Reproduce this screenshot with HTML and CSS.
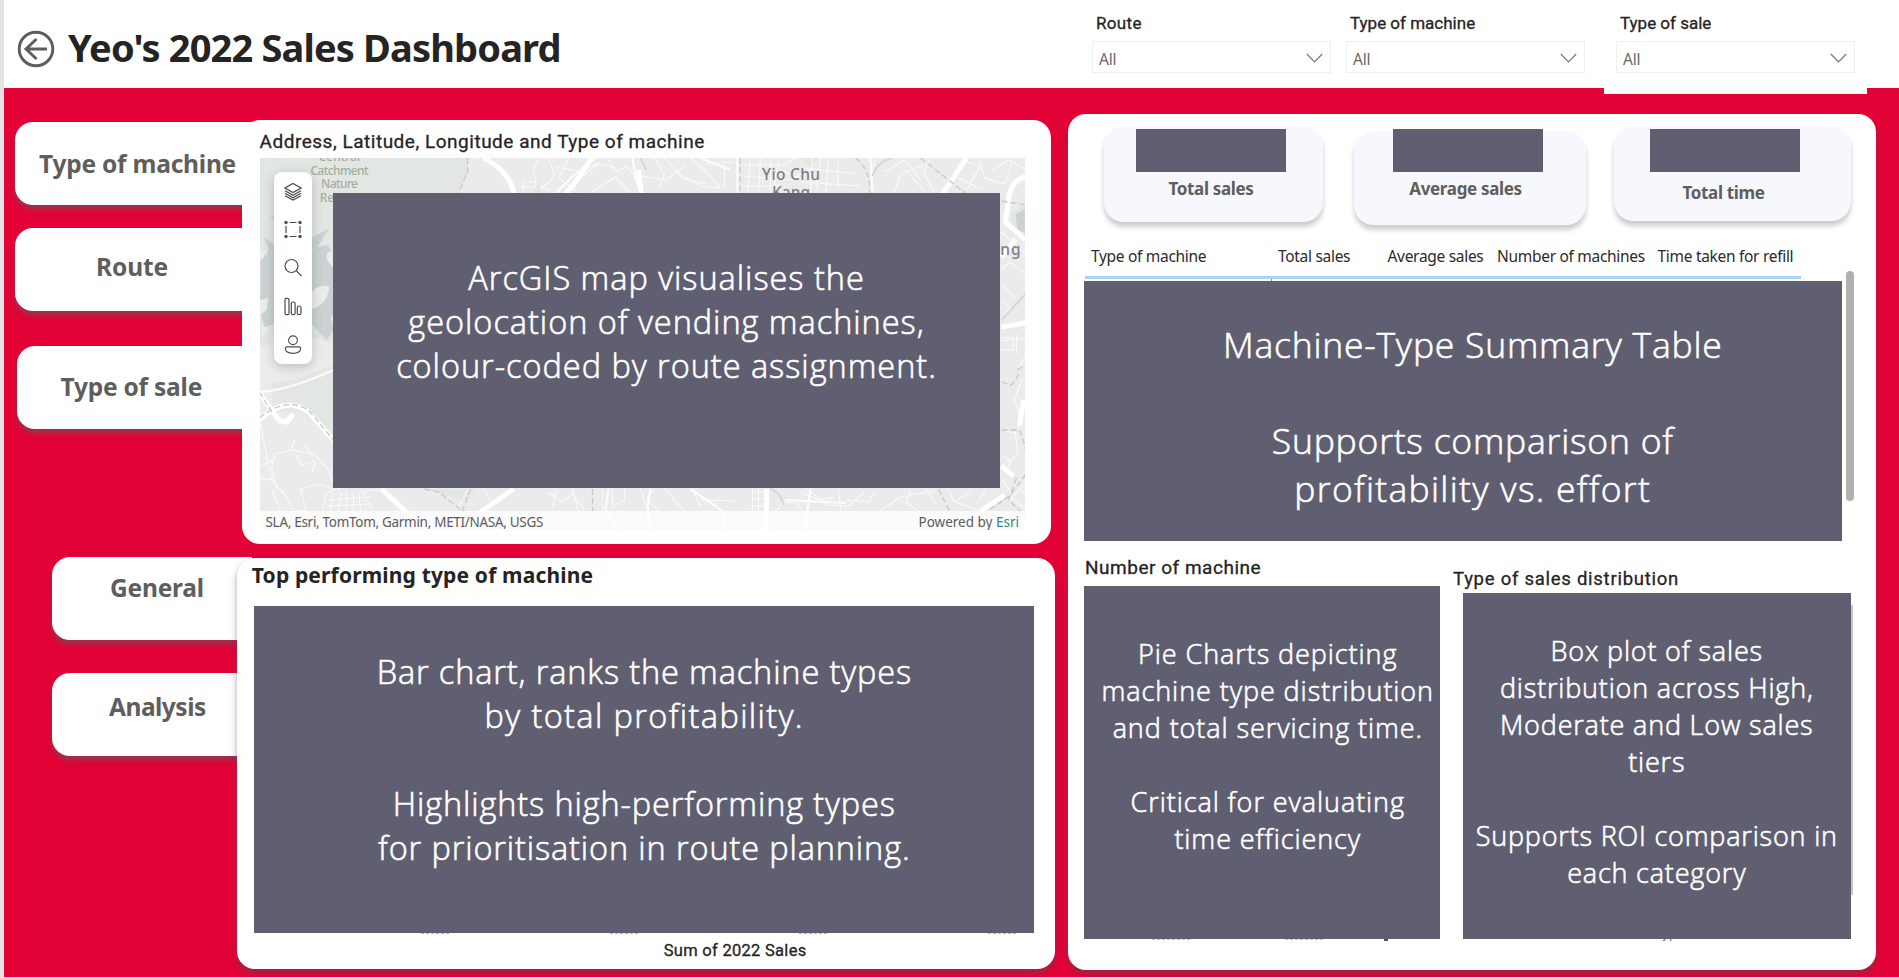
FILE: index.html
```
<!DOCTYPE html>
<html lang="en">
<head>
<meta charset="utf-8">
<title>Yeo's 2022 Sales Dashboard</title>
<link rel="stylesheet" href="styles.css">
</head>
<body>
<div class="page">
  <header class="header">
    <svg class="back" viewBox="0 0 38 38"><circle cx="19" cy="19" r="16.8"/><path d="M30 19H9M19.5 9 9 19l10.500 10"/></svg>
    <h1 class="title">Yeo's 2022 Sales Dashboard</h1>
    <div class="filters">
      <div class="filter">
        <div class="filter-label filter-label-route">Route</div>
        <div class="select"><span>All</span><svg class="chevron" viewBox="0 0 17 10"><path d="M.8 1l7.700 7.800L16.200 1"/></svg></div>
      </div>
      <div class="filter">
        <div class="filter-label">Type of machine</div>
        <div class="select"><span>All</span><svg class="chevron" viewBox="0 0 17 10"><path d="M.8 1l7.700 7.800L16.200 1"/></svg></div>
      </div>
      <div class="filter filter-raised">
        <div class="filter-label">Type of sale</div>
        <div class="select"><span>All</span><svg class="chevron" viewBox="0 0 17 10"><path d="M.8 1l7.700 7.800L16.200 1"/></svg></div>
      </div>
    </div>
  </header>

  <main class="main">
    <nav class="tabs">
      <a class="tab tab-machine">Type of machine</a>
      <a class="tab tab-route">Route</a>
      <a class="tab tab-sale">Type of sale</a>
      <a class="tab tab-general">General</a>
      <a class="tab tab-analysis">Analysis</a>
    </nav>

    <div class="center">
      <section class="card map-card">
        <h2 class="din map-title">Address, Latitude, Longitude and Type of machine</h2>
        <div class="map">
          <svg class="map-art" viewBox="259.5 158 765.5 372" preserveAspectRatio="none">
            <rect x="259" y="158" width="767" height="373" fill="#ebebeb"/>
            <path class="park" d="M259 158H467L468 172 458 193 333 200V345L300 350 259 345Z"/>
            <path class="park" d="M271 384L300 378 333 364V440L318 424 300 412 272 410Z"/>
            <path class="park" d="M425 489H475L468 500 460 500ZM530 191l5-10 8 8-4 5ZM800 158H820L808 166ZM1010 214l15-10v34l-13-8Z"/>
            <path class="water" d="M263 237l16 11 23-5 27-15-12 19 10-2 6 8V330l-7 10-14-15-14-8-34 10-4-14V252l6 4 2-8ZM269 215l6 3-1 3ZM1015 214l10-5v24l-8-3ZM264 349l20-5-5 14Z"/>
            <path class="land" d="M307 296q12-14 22-9 -2 15-14 21l-10 2ZM259 300l9-2-2 12-7 6ZM328 262q-4-5 0-10l5-1v17ZM259 250l6 0-2 8-4 3ZM303 250l10-2-8 10ZM260 325l9 4-8 8ZM330 318l3-3v10Z"/>
            <path class="land" d="M259 350Q290 326 333 345V366Q290 378 259 388Z"/>
            <g class="road minor">
              <path d="M538 158l-5 10 3 16-6 9M548 158l6 18-14 14M556 167l22 4 22-8M568 158l-10 20 20 15M575 182l22-18 20 4M607 158l8 14 12-6 14 22M590 193l25-16 15 16M642 176l24 4 18-14M654 158l10 17-5 12M664 158l18 20 24 6M676 172l24 14 20 2M690 158l16 14 14 16M724 158v30M704 164l28-2M742 165h40l14-7M742 176l48 4 22-12M750 158l-3 34M760 158l-2 35M770 158v34M778 160l-5 30M738 186h42M812 158l-2 34M820 158l-4 32M828 158l-3 34M838 158l-1 30M802 168l56 6M800 182l60 4M780 170l22 10M874 158l-4 32M884 172l20-12 16 20M894 192l6-18 26-10M930 158l-7 14 10 20M905 170l20 22M960 160l20 6-14 24M978 158l6 20 20 6 8-22M990 172l18-12 17 10M958 178l24 12"/>
              <path d="M519 187h16v-5h-12v10M540 186l10 5"/>
              <path d="M259 420l12 60 12 14M276 489l-5-20 3-15 16-4 24 4 14 16 4 12M290 450l4-10M296 455l5 10 14-4-4 14M303 443l8 13M262 458l10 3-12 5M259 478l14 2M272 490l8 22M280 487l12 22 14 3-6-24M300 489l18-5 15 5M322 511l4-18 14-5M330 511l3-18M338 511l3-19M346 511v-20M353 511v-19M360 511l-2-18M328 500l42-3M326 506l46-2M372 510l-10-18 18-3M468 489l-10 18M484 489l8 16M548 492l14 10 10-8 12 16M556 489l-4 18M572 489l6 22M602 489v22M612 489v20M624 489v12l-10 4M640 489l6 18M654 489l-8 10 12 12M692 489l8 18M700 500l36 1M664 489l20 22M752 492h12M750 499h14M750 506h14M752 489v22M758 489v22M776 511l6-9 14 1 6 8M800 492l18 8 16-3M806 489l22 16 20 1 16-14M838 489l2 22M846 500l22 2 6-10M880 511l20-14 34-6M910 489l-4 14 12 8M925 489l10 14M948 489l5 12 26 10M956 500l14-8M985 489l-8 14"/>
              <path d="M1001 232l24 22M1001 270l8-8 16 12M1001 283l14 16M1002 300l8 8-9 12M1001 338h12v12h-12M1016 334v18M1001 341l24-3M1018 368l7-12M1001 430l14 3 2 20-10 14M1001 455l9 6-3 9M1018 430v-20l-4-10 8-22M1008 495l17 14M1016 486l9 8M1025 484l-16 16M1002 480l8 12"/>
            </g>
            <g class="road mid">
              <path d="M595 158l-25 20-15 16M632 158l3 18 4 14M737 158v36M700 158l30 12M870 158l2 34M650 489l-3 18 3 24M690 489l32 22 2 18M810 489l-6 41M608 489l-3 20 12 20M785 500l60 3M259 392q30-2 74-22"/>
            </g>
            <g class="road major">
              <path d="M483 158q25 12 31 36M591 158q-12 20-26 36M638 170l3 24M966 158l-24 36M1025 176q-16 6-17 24l-3 22 20 18M1001 257l14-18M1001 327l24-4M381 489l26 24M513 489l-34 24M766 489v41M259 420Q285 395 308 412L333 440M259 393l14 20 6 8 7 1 7-8M1023 400l-4 26M1001 466l12 10M980 511l24-16"/>
            </g>
            <g class="rail">
              <path d="M467 158v14l-9 21M739.500 158v36M855 158q16 12 14 36M920 158l46 36M1001 201l24 4M1001 382l10 3 6-8 1-8 7-4M1001 430h18q10 22 5 46l-15 20-26 18M1016 478l-8 22 17 16M259 418Q285 396 308 410L333 440M259 392l12 20M424 489l14 3 25 20M470 489l-8 22M592 489v22M938 489l12 24"/>
            </g>
            <path class="creek" d="M892 158q-16 4-20 18M640 158l6 12M770 489q10 3 13 16M1001 320l24-26"/>
            <g class="place park-name">
              <text x="339" y="161">Central</text>
              <text x="339" y="174.500" textLength="58">Catchment</text>
              <text x="339" y="188" textLength="37">Nature</text>
              <text x="342" y="201.500">Reserve</text>
            </g>
            <g class="place town">
              <text x="790.500" y="179.500" textLength="58">Yio Chu</text>
              <text x="790.500" y="197.500" textLength="38">Kang</text>
              <text x="983" y="255" textLength="74">Hougang</text>
            </g>
          </svg>
          <div class="note map-note">ArcGIS map visualises the<br>geolocation of vending machines,<br>colour-coded by route assignment.</div>
          <div class="toolbar">
            <svg class="tool" viewBox="0 0 18 18"><path d="M9 1l8 4.500-8 4.500-8-4.500zM1 8.300l8 4.400 8-4.400M1 10.800l8 4.400 8-4.400M1 13.200L9 17.500l8-4.300"/></svg>
            <svg class="tool" viewBox="0 0 18 18"><path d="M5.500 2H12.500M5.500 16H12.500M2 5.500V12.500M16 5.500V12.500"/><g class="dot"><circle cx="2" cy="2" r="1.700"/><circle cx="16" cy="2" r="1.700"/><circle cx="2" cy="16" r="1.700"/><circle cx="16" cy="16" r="1.700"/></g></svg>
            <svg class="tool" viewBox="0 0 18 18"><circle cx="7.500" cy="7.500" r="6.500"/><path d="M12.200 12.200L17.500 17.500"/></svg>
            <svg class="tool" viewBox="0 0 18 18"><rect x="1" y=".8" width="4" height="16.400" rx="1.500"/><rect x="7.300" y="4.500" width="3.800" height="12.700" rx="1.500"/><rect x="13.300" y="8.500" width="3.700" height="8.700" rx="1.800"/></svg>
            <svg class="tool" viewBox="0 0 18 20"><circle cx="9" cy="5.500" r="4.600"/><path d="M2.500 12.500h13q1.500 0 1.500 1.500 0 5.300-8 5.300T1 14q0-1.500 1.500-1.500z"/></svg>
          </div>
          <div class="credits"><span class="sources">SLA, Esri, TomTom, Garmin, METI/NASA, USGS</span><span class="powered">Powered by <a>Esri</a></span></div>
        </div>
      </section>

      <section class="card top-card">
        <h2 class="top-title">Top performing type of machine</h2>
        <div class="note top-note">Bar chart, ranks the machine types<br><span class="wide">by total profitability.</span><br><br>Highlights high-performing types<br>for prioritisation in route planning.</div>
        <div class="ticks"><i></i><i></i><i></i><i></i></div>
        <div class="din axis">Sum of 2022 Sales</div>
      </section>
    </div>

    <section class="card right">
      <div class="kpis">
        <div class="kpi kpi-sales"><div class="mask"></div><div class="kpi-label">Total sales</div></div>
        <div class="kpi kpi-average"><div class="mask"></div><div class="kpi-label">Average sales</div></div>
        <div class="kpi kpi-time"><div class="mask"></div><div class="kpi-label">Total time</div></div>
      </div>
      <div class="thead"><span>Type of machine</span><span>Total sales</span><span>Average sales</span><span>Number of machines</span><span>Time taken for refill</span></div>
      <div class="col-mark"></div>
      <div class="tbody">
        <div class="note table-note">Machine-Type Summary Table<br><br>Supports comparison of<br><span class="wide">profitability vs. effort</span></div>
        <div class="scroll"></div>
      </div>
      <div class="charts">
        <div class="chart">
          <h2 class="din pie-title">Number of machine</h2>
          <div class="note small pie-note">Pie Charts depicting<br>machine type distribution<br>and total servicing time.<br><br>Critical for evaluating<br>time efficiency</div>
          <div class="legend"><i></i><i></i><b></b></div>
        </div>
        <div class="chart box-chart">
          <h2 class="din box-title">Type of sales distribution</h2>
          <div class="box-row">
            <div class="note small box-note">Box plot of sales<br>distribution across High,<br>Moderate and Low sales<br>tiers<br><br>Supports ROI comparison in<br>each category</div>
            <div class="edge"></div>
          </div>
          <div class="under">Type of sale</div>
        </div>
      </div>
    </section>
  </main>
</div>
</body>
</html>
```
FILE: styles.css
```
* { box-sizing: border-box; }
body { margin: 0; background: #fff; }
h1, h2 { margin: 0; }

.page {
  width: 1899px;
  height: 978px;
  overflow: hidden;
  display: flex;
  flex-direction: column;
  border-left: 4px solid #e4e4e6;
  border-bottom: 1px solid #f6e3e8;
  background: #e30236;
  font-family: "Noto Sans", sans-serif;
}

/* header */
.header {
  height: 88px;
  flex: none;
  display: flex;
  align-items: flex-start;
  background: #fff;
}
.back {
  width: 38px;
  height: 38px;
  margin: 30px 0 0 12.500px;
  fill: none;
  stroke: #5e5d5b;
  stroke-width: 2.900;
}
.title {
  margin: 22px 0 0 13.500px;
  font-size: 38px;
  line-height: 50px;
  letter-spacing: -.84px;
  color: #252423;
  white-space: nowrap;
}
.filters {
  display: flex;
  margin: 0 32px 0 auto;
  align-items: flex-start;
}
.filter { width: 239px; margin-right: 15px; padding-top: 12.500px; }
.filter-raised {
  width: 263px;
  height: 94px;
  margin: 0 0 0 4px;
  padding-left: 12px;
  padding-right: 12px;
  background: #fff;
  position: relative;
}
.filter-label {
  padding-left: 4px;
  font: 400 17px/20px Roboto, sans-serif;
  letter-spacing: 0;
  color: #252423;
  -webkit-text-stroke: .3px #252423;
}
.filter-label-route { letter-spacing: .35px; }
.select {
  height: 32.500px;
  margin-top: 8px;
  padding: 4.500px 7px 0 6px;
  display: flex;
  justify-content: space-between;
  border: 1.500px solid #efefef;
  font: 400 15.500px/26px "Noto Sans", sans-serif;
  letter-spacing: -.2px;
  color: #6a6968;
}
.chevron {
  width: 17px;
  height: 10px;
  margin-top: 7px;
  fill: none;
  stroke: #777;
  stroke-width: 1.200;
}

.main { flex: 1; display: flex; align-items: flex-start; }

/* navigation tabs, tucked under the cards */
.tabs {
  width: 233px;
  padding: 34px 0 0 10.500px;
  flex: none;
  display: flex;
  flex-direction: column;
}
.tab {
  width: 250px;
  height: 83px;
  border-radius: 18px 0 0 18px;
  background: #fff;
  box-shadow: 0 5px 5px rgba(120, 75, 85, .6);
  font-size: 24.500px;
  font-weight: 700;
  line-height: 30px;
  letter-spacing: -.22px;
  color: #605e5c;
  white-space: nowrap;
}
.tab-machine { padding: 26.500px 0 0 24.500px; }
.tab-route { margin-top: 23px; padding: 24px 0 0 81.500px; letter-spacing: -.11px; }
.tab-sale { margin: 34.500px 0 0 2.500px; padding: 26.500px 0 0 43.500px; }
.tab-general { width: 200px; margin: 128.500px 0 0 37.500px; padding: 16px 0 0 58px; }
.tab-analysis { width: 200px; margin: 33px 0 0 37.500px; padding: 19px 0 0 57px; letter-spacing: -.5px; }

.card { background: #fff; border-radius: 18px; }
.center { position: relative; width: 818px; flex: none; padding-top: 31.500px; }

.din {
  font: 400 19px/24px Roboto, sans-serif;
  letter-spacing: .52px;
  color: #252423;
  -webkit-text-stroke: .3px #252423;
  white-space: nowrap;
}

/* captions that cover the charts */
.note {
  background: #605f71;
  color: #fff;
  text-align: center;
  white-space: nowrap;
  font: 300 32.500px/44px "Open Sans", sans-serif;
  letter-spacing: .97px;
  -webkit-text-stroke: .6px #fff;
}

/* map */
.map-card { width: 809.500px; height: 424px; margin-left: 4.500px; padding: 10.700px 0 0 18px; }
.map { position: relative; width: 765.500px; height: 372px; margin-top: 3.800px; overflow: hidden; }
.map-art { display: block; width: 100%; height: 100%; fill: none; }
.park { fill: #e2e7e3; }
.water { fill: #ccd2d4; }
.land { fill: #ececec; }
.road { stroke: #fff; }
.minor { stroke-width: 1.100; opacity: .75; }
.mid { stroke-width: 2.200; opacity: .85; }
.major { stroke-width: 5; }
.rail { stroke: #c9c8c6; stroke-width: 1.300; stroke-dasharray: 6 3; }
.creek { stroke: #d3d8d9; stroke-width: 2; }
.place { font-family: "Noto Sans", sans-serif; text-anchor: middle; }
.park-name { fill: #a6ad9f; font-size: 12px; font-weight: 500; }
.town { fill: #808080; font-size: 15.500px; font-weight: 500; }
.map-note { position: absolute; left: 73.500px; top: 35px; width: 667px; height: 295.500px; padding-top: 63px; }
.toolbar {
  position: absolute;
  left: 14.500px;
  top: 14px;
  width: 38px;
  height: 192px;
  padding: 10px 0;
  display: flex;
  flex-direction: column;
  align-items: center;
  justify-content: space-between;
  background: #fff;
  border-radius: 8px;
  box-shadow: 0 3px 12px rgba(0, 0, 0, .2);
}
.tool { width: 18px; height: 19px; fill: none; stroke: #4c4c4c; stroke-width: 1.200; }
.dot { fill: #4c4c4c; stroke: none; }
.credits {
  position: absolute;
  left: 0;
  right: 0;
  bottom: 0;
  height: 19px;
  padding: 0 6px;
  display: flex;
  justify-content: space-between;
  background: rgba(255, 255, 255, .8);
  font-size: 13.500px;
  line-height: 22px;
  letter-spacing: -.3px;
  color: #5c5c5c;
}
.powered { letter-spacing: 0; }
.powered a { color: #2f8b78; }

/* top performing */
.top-card {
  height: 411.500px;
  margin-top: 14px;
  padding: 3.500px 0 0 17.300px;
  box-shadow: 0 4px 6px rgba(90, 70, 75, .5);
}
.top-title {
  margin-left: -2.500px;
  font-size: 21px;
  line-height: 28px;
  letter-spacing: .16px;
  color: #252423;
}
.top-note { width: 780px; height: 326.500px; margin-top: 17px; padding-top: 44px; letter-spacing: .87px; }
.top-note .wide { letter-spacing: 1.380px; }
.ticks { display: flex; gap: 161px; padding-left: 167px; height: 1px; }
.ticks i { width: 28px; border-top: 1px dashed #b5b5b5; }
.axis { margin: 5px 0 0 409.500px; font-size: 16.500px; letter-spacing: .28px; }

/* right panel */
.right {
  width: 808px;
  height: 856px;
  flex: none;
  margin: 26px 0 0 13px;
  padding: 12px 0 0 16px;
  box-shadow: 0 4px 6px rgba(90, 70, 75, .5);
}
.kpis { height: 119px; padding-left: 19.500px; display: flex; align-items: flex-start; }
.kpi {
  border-radius: 20px;
  background: #f7f8fd;
  box-shadow: 0 5px 5px rgba(0, 0, 0, .2);
}
.kpi-sales { width: 219.500px; height: 96px; padding: 3px 0 0 32.500px; }
.kpi-average { width: 232px; height: 93.500px; margin: 5px 0 0 30.500px; padding-left: 39px; }
.kpi-average .mask { margin-top: -2px; }
.kpi-average .kpi-label { margin-left: -2px; }
.kpi-time { width: 237px; height: 95px; margin-left: 28px; padding: 3px 0 0 36px; }
.kpi-time .kpi-label { margin: 9.500px 0 0 -1px; }
.mask { width: 150px; height: 43px; background: #605f71; }
.kpi-label {
  width: 150px;
  margin-top: 5.500px;
  text-align: center;
  font-size: 17px;
  font-weight: 700;
  line-height: 22px;
  letter-spacing: -.33px;
  color: #605e5c;
}
.thead {
  width: 716px;
  height: 33.500px;
  margin-left: 1px;
  padding-left: 6px;
  display: grid;
  grid-template-columns: 187px 109.500px 109.500px 160.500px auto;
  border-bottom: 3px solid #a9d3fb;
  font-size: 15.500px;
  line-height: 22px;
  letter-spacing: -.3px;
  color: #2b2a29;
  white-space: nowrap;
}
.col-mark { width: 1px; height: 2.500px; margin-left: 187px; background: #4ba3f5; }
.tbody { display: flex; gap: 4px; }
.table-note {
  width: 757.500px;
  height: 260px;
  padding: 39px 0 0 20px;
  font-size: 35.500px;
  line-height: 48px;
  letter-spacing: .78px;
}
.table-note .wide { letter-spacing: 1.300px; }
.scroll { width: 8.500px; height: 230px; margin-top: -10px; border-radius: 5px; background: #b1b0ae; }
.charts { display: flex; align-items: flex-start; }
.chart { width: 370px; padding-top: 14.500px; }
.small { font-size: 27px; line-height: 37px; letter-spacing: .92px; }
.pie-title { padding-left: 1px; }
.pie-note { width: 355.500px; height: 353px; margin-top: 6.500px; padding: 49px 0 0 12px; }
.legend { display: flex; height: 2px; padding-left: 68px; }
.legend i { width: 38px; margin-right: 95px; border-top: 1px dashed #a9c3d8; }
.legend b { width: 4px; height: 2px; margin-left: -34px; background: #555; }
.box-chart { width: 400px; padding-top: 26px; }
.box-title { margin-left: -1px; font-size: 18.500px; letter-spacing: .74px; }
.box-row { display: flex; margin: 2px 0 0 9px; position: relative; }
.box-note { width: 387.500px; height: 346px; padding-top: 38.500px; letter-spacing: .81px; }
.edge { width: 2px; height: 290px; margin-top: 12px; background: #c6c6c8; }
.under {
  margin: -16px 0 0 200.500px;
  font: 400 14px/20px Roboto, sans-serif;
  color: #777;
}
```
